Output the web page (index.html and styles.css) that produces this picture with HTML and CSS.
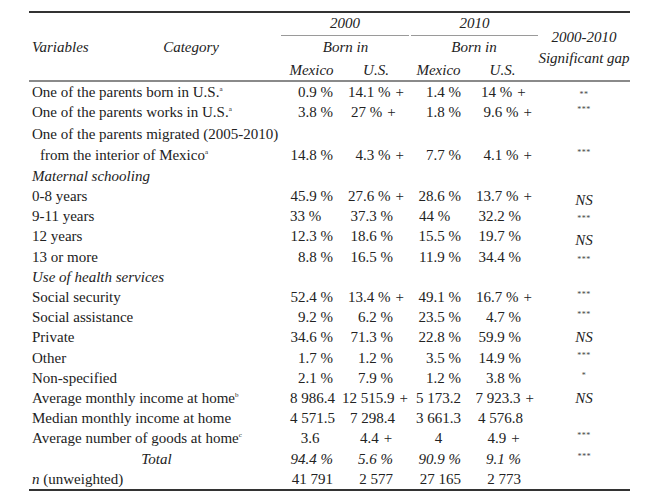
FILE: index.html
```html
<!DOCTYPE html>
<html lang="en">
<head>
<meta charset="utf-8">
<title>Table</title>
<link rel="stylesheet" href="styles.css">
</head>
<body>
<div class="page">
<table class="tbl">
  <colgroup>
    <col class="c-label"><col class="c-m00"><col class="c-u00"><col class="c-m10"><col class="c-u10"><col class="c-gap">
  </colgroup>
  <thead>
    <tr class="hr-a">
      <th rowspan="3" class="h-label"><div class="h-split"><span>Variables</span><span class="h-cat">Category</span></div></th>
      <th colspan="2" class="h-year"><div class="yr yr-l">2000</div></th>
      <th colspan="2" class="h-year"><div class="yr yr-r">2010</div></th>
      <th rowspan="3" class="h-gap">2000-2010<br>Significant gap</th>
    </tr>
    <tr class="hr-b">
      <th colspan="2">Born in</th>
      <th colspan="2">Born in</th>
    </tr>
    <tr class="hr-c">
      <th>Mexico</th><th>U.S.</th><th>Mexico</th><th>U.S.</th>
    </tr>
  </thead>
  <tbody>
    <tr>
      <td class="lbl">One of the parents born in U.S.<sup>a</sup></td>
      <td class="m00">0.9 %</td>
      <td class="u00">14.1 %<span class="p">+</span></td>
      <td class="m10">1.4 %</td>
      <td class="u10 l">14 %<span class="p">+</span></td>
      <td class="gap"><span class="ast mid">**</span></td>
    </tr>
    <tr>
      <td class="lbl">One of the parents works in U.S.<sup>a</sup></td>
      <td class="m00">3.8 %</td>
      <td class="u00 l">27 %<span class="p">+</span></td>
      <td class="m10">1.8 %</td>
      <td class="u10">9.6 %<span class="p">+</span></td>
      <td class="gap"><span class="ast">***</span></td>
    </tr>
    <tr class="two">
      <td class="lbl">One of the parents migrated (2005-2010)<br><span class="ind">from the interior of Mexico<sup>a</sup></span></td>
      <td class="m00">14.8 %</td>
      <td class="u00">4.3 %<span class="p">+</span></td>
      <td class="m10">7.7 %</td>
      <td class="u10">4.1 %<span class="p">+</span></td>
      <td class="gap"><span class="ast">***</span></td>
    </tr>
    <tr>
      <td class="lbl sec" colspan="6">Maternal schooling</td>
    </tr>
    <tr>
      <td class="lbl">0-8 years</td>
      <td class="m00">45.9 %</td>
      <td class="u00">27.6 %<span class="p">+</span></td>
      <td class="m10">28.6 %</td>
      <td class="u10">13.7 %<span class="p">+</span></td>
      <td class="gap"><span class="ns low">NS</span></td>
    </tr>
    <tr>
      <td class="lbl">9-11 years</td>
      <td class="m00 l">33 %</td>
      <td class="u00">37.3 %</td>
      <td class="m10 l">44 %</td>
      <td class="u10">32.2 %</td>
      <td class="gap"><span class="ast mid">***</span></td>
    </tr>
    <tr>
      <td class="lbl">12 years</td>
      <td class="m00">12.3 %</td>
      <td class="u00">18.6 %</td>
      <td class="m10">15.5 %</td>
      <td class="u10">19.7 %</td>
      <td class="gap"><span class="ns low">NS</span></td>
    </tr>
    <tr>
      <td class="lbl">13 or more</td>
      <td class="m00">8.8 %</td>
      <td class="u00">16.5 %</td>
      <td class="m10">11.9 %</td>
      <td class="u10">34.4 %</td>
      <td class="gap"><span class="ast mid">***</span></td>
    </tr>
    <tr>
      <td class="lbl sec" colspan="6">Use of health services</td>
    </tr>
    <tr>
      <td class="lbl">Social security</td>
      <td class="m00">52.4 %</td>
      <td class="u00">13.4 %<span class="p">+</span></td>
      <td class="m10">49.1 %</td>
      <td class="u10">16.7 %<span class="p">+</span></td>
      <td class="gap"><span class="ast">***</span></td>
    </tr>
    <tr>
      <td class="lbl">Social assistance</td>
      <td class="m00">9.2 %</td>
      <td class="u00">6.2 %</td>
      <td class="m10">23.5 %</td>
      <td class="u10">4.7 %</td>
      <td class="gap"><span class="ast">***</span></td>
    </tr>
    <tr>
      <td class="lbl">Private</td>
      <td class="m00">34.6 %</td>
      <td class="u00">71.3 %</td>
      <td class="m10">22.8 %</td>
      <td class="u10">59.9 %</td>
      <td class="gap"><span class="ns">NS</span></td>
    </tr>
    <tr>
      <td class="lbl">Other</td>
      <td class="m00">1.7 %</td>
      <td class="u00">1.2 %</td>
      <td class="m10">3.5 %</td>
      <td class="u10">14.9 %</td>
      <td class="gap"><span class="ast">***</span></td>
    </tr>
    <tr>
      <td class="lbl">Non-specified</td>
      <td class="m00">2.1 %</td>
      <td class="u00">7.9 %</td>
      <td class="m10">1.2 %</td>
      <td class="u10">3.8 %</td>
      <td class="gap"><span class="ast">*</span></td>
    </tr>
    <tr>
      <td class="lbl">Average monthly income at home<sup>b</sup></td>
      <td class="m00 wide">8 986.4</td>
      <td class="u00 wide">12 515.9<span class="p">+</span></td>
      <td class="m10">5 173.2</td>
      <td class="u10 wide">7 923.3<span class="p">+</span></td>
      <td class="gap"><span class="ns">NS</span></td>
    </tr>
    <tr>
      <td class="lbl">Median monthly income at home</td>
      <td class="m00 wide">4 571.5</td>
      <td class="u00 wide">7 298.4</td>
      <td class="m10">3 661.3</td>
      <td class="u10 wide">4 576.8</td>
      <td class="gap"></td>
    </tr>
    <tr>
      <td class="lbl">Average number of goods at home<sup>c</sup></td>
      <td class="m00 c">3.6</td>
      <td class="u00 c">4.4<span class="p">+</span></td>
      <td class="m10 c">4</td>
      <td class="u10 c">4.9<span class="p">+</span></td>
      <td class="gap"><span class="ast">***</span></td>
    </tr>
    <tr class="total">
      <td class="lbl tot">Total</td>
      <td class="m00">94.4 %</td>
      <td class="u00">5.6 %</td>
      <td class="m10">90.9 %</td>
      <td class="u10">9.1 %</td>
      <td class="gap"><span class="ast">***</span></td>
    </tr>
    <tr>
      <td class="lbl"><i>n</i> (unweighted)</td>
      <td class="m00">41 791</td>
      <td class="u00">2 577</td>
      <td class="m10">27 165</td>
      <td class="u10">2 773</td>
      <td class="gap"></td>
    </tr>
  </tbody>
</table>
</div>
</body>
</html>
```
FILE: styles.css
```css
html, body {
  margin: 0;
  padding: 0;
  background: #ffffff;
}
.page {
  padding: 11px 0 0 29px;
}
.tbl {
  border-collapse: collapse;
  table-layout: fixed;
  width: 601px;
  font-family: "Liberation Serif", "Times New Roman", serif;
  font-size: 15px;
  color: #222;
  border-top: 2px solid #333;
  border-bottom: 2px solid #333;
}
.c-label { width: 252px; }
.c-m00 { width: 61px; }
.c-u00 { width: 68px; }
.c-m10 { width: 57px; }
.c-u10 { width: 71px; }
.c-gap { width: 92px; }

th {
  font-weight: normal;
  font-style: italic;
  padding: 0;
  line-height: 20px;
  text-align: center;
  vertical-align: middle;
}
thead {
  border-bottom: 2px solid #8a8a8a;
}
.hr-a th.h-year {
  vertical-align: top;
  padding: 0;
}
.yr {
  line-height: 20px;
  padding-bottom: 2px;
  border-bottom: 1px solid #9a9a9a;
}
.yr-l { margin-right: 1px; }
.yr-r { margin-left: 1px; }
.hr-b th {
  padding: 1px 0 3px;
}
.hr-c th {
  padding: 0;
}
.h-label {
  text-align: left;
  padding-left: 3px;
}
.h-split {
  display: flex;
  justify-content: space-between;
}
.h-cat {
  padding-right: 62px;
}
.h-gap {
  line-height: 21px;
  padding-top: 2px;
}

td {
  padding: 0;
  line-height: 20.2px;
  white-space: nowrap;
  vertical-align: bottom;
}
tr.two td {
  padding-top: 2px;
  padding-bottom: 1px;
}
.lbl {
  padding-left: 3px;
  text-align: left;
}
.ind {
  padding-left: 8px;
}
.sec {
  font-style: italic;
}
.tot {
  text-align: center;
  font-style: italic;
}
.total td {
  font-style: italic;
}
sup {
  font-size: 7px;
  line-height: 0;
  vertical-align: 6px;
}

.m00 { text-align: right; padding-right: 9px; padding-left: 6px; }
.u00 { text-align: right; padding-right: 17px; padding-left: 6px; }
.m10 { text-align: right; padding-right: 6px; padding-left: 6px; }
.u10 { text-align: right; padding-right: 17px; padding-left: 8px; }
td.wide { padding-left: 0; }
td.wide.m00 { padding-right: 7px; }
td.wide.u00 { padding-right: 15px; }
td.wide.u10 { padding-right: 15px; }
td.l { text-align: left; }
td.l.m00 { padding-left: 9px; }
td.l.u00 { padding-left: 9px; }
td.l.m10 { padding-left: 9px; }
td.l.u10 { padding-left: 14px; }
td.c { text-align: center; }

.p {
  margin-left: 5px;
  margin-right: -11px;
}

.gap {
  text-align: center;
}
.ast {
  font-size: 8px;
  line-height: 0;
  color: #444;
  letter-spacing: 0.5px;
  vertical-align: 5px;
}
.ast.mid {
  vertical-align: 0;
}
.ns {
  font-style: italic;
}
.ns.low {
  line-height: 0;
  vertical-align: -4px;
}
```
